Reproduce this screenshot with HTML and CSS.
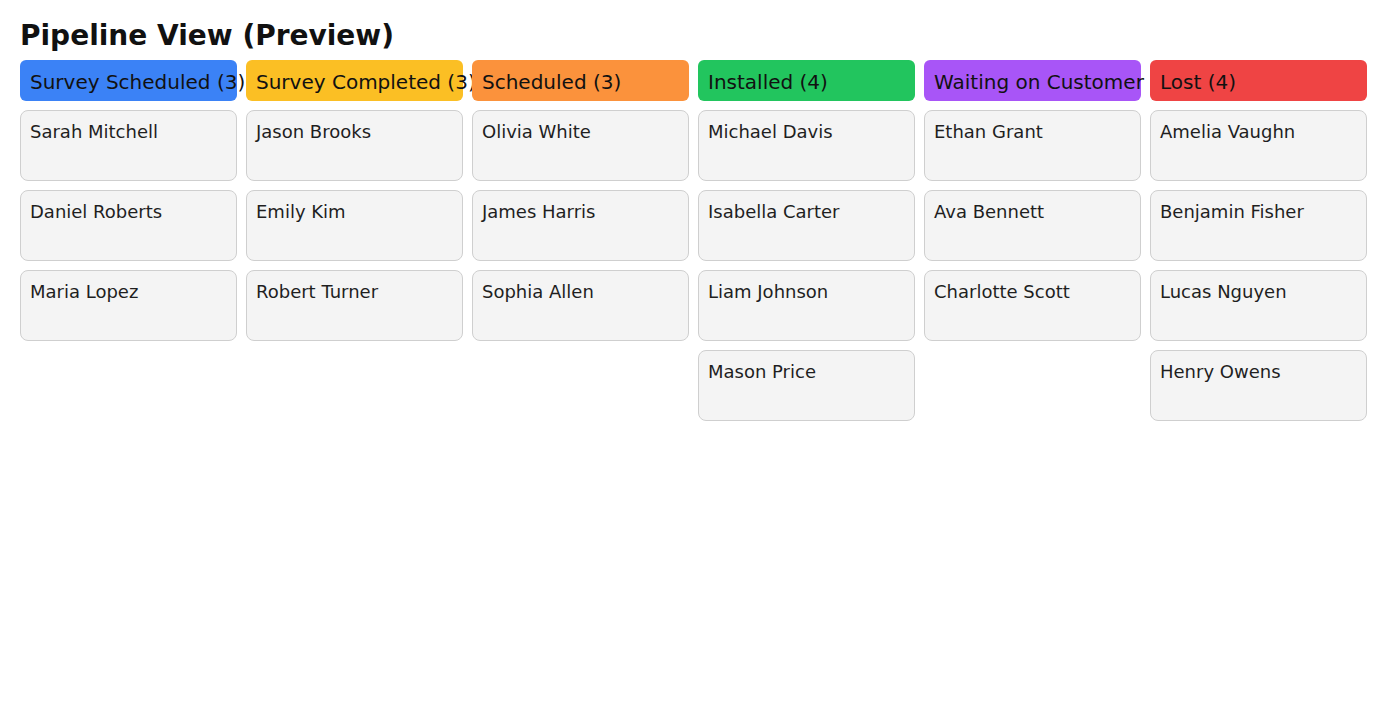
FILE: index.html
```html
<!DOCTYPE html>
<html>
<head>
<meta charset="utf-8">
<link rel="stylesheet" href="styles.css">
</head>
<body>
<h1 class="title">Pipeline View (Preview)</h1>
<div class="board">
  <div class="column">
    <div class="col-header blue">Survey Scheduled (3)</div>
    <div class="card">Sarah Mitchell</div>
    <div class="card">Daniel Roberts</div>
    <div class="card">Maria Lopez</div>
  </div>
  <div class="column">
    <div class="col-header yellow">Survey Completed (3)</div>
    <div class="card">Jason Brooks</div>
    <div class="card">Emily Kim</div>
    <div class="card">Robert Turner</div>
  </div>
  <div class="column">
    <div class="col-header orange">Scheduled (3)</div>
    <div class="card">Olivia White</div>
    <div class="card">James Harris</div>
    <div class="card">Sophia Allen</div>
  </div>
  <div class="column">
    <div class="col-header green">Installed (4)</div>
    <div class="card">Michael Davis</div>
    <div class="card">Isabella Carter</div>
    <div class="card">Liam Johnson</div>
    <div class="card">Mason Price</div>
  </div>
  <div class="column">
    <div class="col-header purple">Waiting on Customer (3)</div>
    <div class="card">Ethan Grant</div>
    <div class="card">Ava Bennett</div>
    <div class="card">Charlotte Scott</div>
  </div>
  <div class="column">
    <div class="col-header red">Lost (4)</div>
    <div class="card">Amelia Vaughn</div>
    <div class="card">Benjamin Fisher</div>
    <div class="card">Lucas Nguyen</div>
    <div class="card">Henry Owens</div>
  </div>
</div>
</body>
</html>
```
FILE: styles.css
```css
html, body {
  margin: 0;
  padding: 0;
  background: #ffffff;
}
body {
  padding: 20px;
  font-family: "DejaVu Sans", sans-serif;
  color: #1a1a1a;
}
.title {
  margin: 0 0 8px 0;
  font-size: 28px;
  line-height: 32px;
  font-weight: bold;
  color: #111111;
}
.board {
  display: grid;
  grid-template-columns: repeat(6, 217px);
  column-gap: 9px;
  align-items: start;
}
.column {
  display: flex;
  flex-direction: column;
  gap: 9px;
  min-width: 0;
}
.col-header {
  height: 41px;
  box-sizing: border-box;
  padding: 10px 10px 0 10px;
  border-radius: 6px;
  font-size: 20px;
  line-height: normal;
  white-space: nowrap;
  color: #111111;
}
.blue { background: #3b82f6; }
.yellow { background: #fbbf24; }
.orange { background: #fb923c; }
.green { background: #22c55e; }
.purple { background: #a855f7; }
.red { background: #ef4444; }
.card {
  box-sizing: border-box;
  height: 71px;
  padding: 10px 9px;
  background: #f4f4f4;
  border: 1px solid #cfcfcf;
  border-radius: 8px;
  font-size: 18px;
  line-height: normal;
  color: #1f1f1f;
}
```
